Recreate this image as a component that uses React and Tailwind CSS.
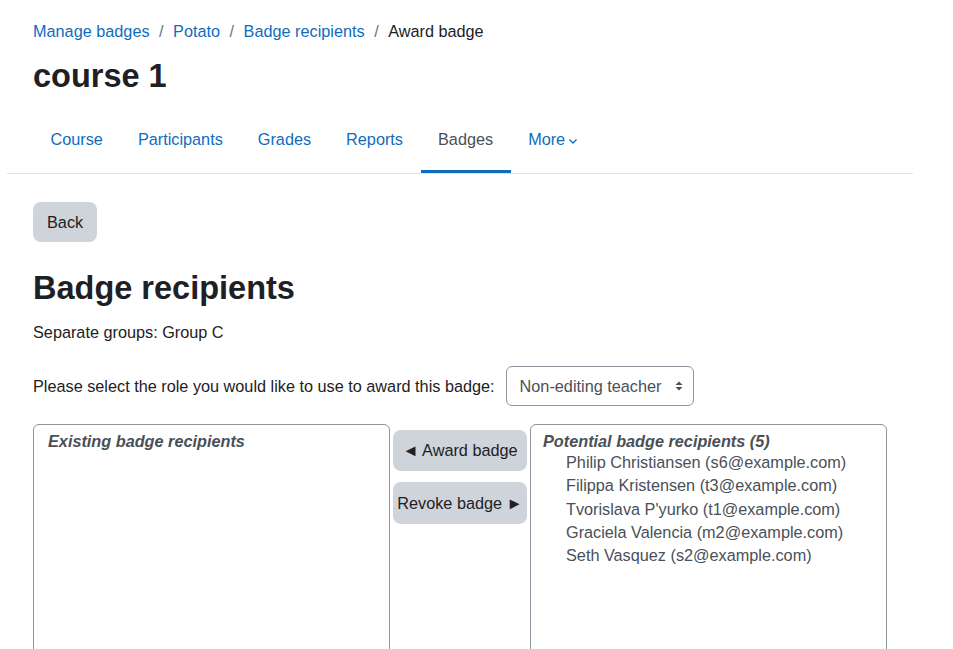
import React from 'react';

const tabs = ['Course', 'Participants', 'Grades', 'Reports', 'Badges'];

const potential = [
    'Philip Christiansen (s6@example.com)',
    'Filippa Kristensen (t3@example.com)',
    "Tvorislava P'yurko (t1@example.com)",
    'Graciela Valencia (m2@example.com)',
    'Seth Vasquez (s2@example.com)',
];

const App = () => {
    return (
        <div className="min-h-screen bg-white text-[#1d2125] text-[16.25px] font-['Liberation_Sans',Arial,sans-serif]">
            <div className="ml-[7px] w-[906px]">
                {/* Page header */}
                <div className="px-[26px] pt-[19px]">
                    <nav className="flex items-center leading-[24px]">
                        <a className="text-[#0f6cbf]">Manage badges</a>
                        <span className="px-[9.5px] text-[#6a737b]">/</span>
                        <a className="text-[#0f6cbf]">Potato</a>
                        <span className="px-[9.5px] text-[#6a737b]">/</span>
                        <a className="text-[#0f6cbf]">Badge recipients</a>
                        <span className="px-[9.5px] text-[#6a737b]">/</span>
                        <span>Award badge</span>
                    </nav>
                    <h1 className="mt-[14px] text-[32.5px] leading-[38px] font-bold">course 1</h1>
                </div>

                {/* Secondary navigation */}
                <div className="mt-[12px] border-b border-[#dee2e6] pl-[26px]">
                    <ul className="flex">
                        {tabs.map((t) => (
                            <li
                                key={t}
                                className={`flex items-center h-[66px] pt-[2px] px-[17.5px] border-b-[3px] ${t === 'Badges'
                                    ? 'border-[#0f6cbf] text-[#495057]'
                                    : 'border-transparent text-[#0f6cbf]'
                                    }`}
                            >
                                {t}
                            </li>
                        ))}
                        <li className="flex items-center gap-[3px] h-[66px] pt-[2px] px-[17.5px] border-b-[3px] border-transparent text-[#0f6cbf]">
                            More
                            <svg width="10" height="10" viewBox="0 0 10 10" className="mt-[2px]">
                                <path d="M1.5 3.5 L5 7 L8.5 3.5" fill="none" stroke="#0f6cbf" strokeWidth="1.3" />
                            </svg>
                        </li>
                    </ul>
                </div>

                {/* Main */}
                <div className="px-[26px]">
                    <button className="mt-[28px] h-[40px] px-[14px] rounded-[8px] bg-[#ced4da] text-[#1d2125]">
                        Back
                    </button>

                    <h2 className="mt-[27px] text-[32.5px] leading-[38px] font-bold">Badge recipients</h2>

                    <p className="mt-[13px] leading-[24px]">Separate groups: Group C</p>

                    <div className="mt-[22px] flex items-center">
                        <label className="leading-[24px]">Please select the role you would like to use to award this badge:</label>
                        <div className="ml-[11px] flex items-center justify-between h-[40px] w-[188px] pl-[13px] pr-[10px] rounded-[6px] border border-[#8f959e] text-[#495057]">
                            <span>Non-editing teacher</span>
                            <svg width="8" height="12" viewBox="0 0 8 12">
                                <path d="M4 1.5 L7.5 5 L0.5 5 Z" fill="#495057" />
                                <path d="M4 10.5 L7.5 7 L0.5 7 Z" fill="#495057" />
                            </svg>
                        </div>
                    </div>

                    {/* Recipient selectors */}
                    <div className="mt-[18px] flex items-start gap-[3px]">
                        <div className="w-[357px] h-[300px] rounded-[6px] border border-[#8f959e] pt-[6px] pl-[14px]">
                            <div className="italic font-bold text-[#495057] leading-[20px]">Existing badge recipients</div>
                        </div>

                        <div className="w-[134px] flex flex-col gap-[11px] pt-[6px]">
                            <button className="h-[41px] rounded-[8px] bg-[#ced4da] text-[#1d2125]">◄ Award badge</button>
                            <button className="h-[42px] rounded-[8px] bg-[#ced4da] text-[#1d2125]">Revoke badge ►</button>
                        </div>

                        <div className="w-[357px] h-[300px] rounded-[6px] border border-[#8f959e] pt-[6px] pl-[12px]">
                            <div className="italic font-bold text-[#495057] leading-[20px]">Potential badge recipients (5)</div>
                            <ul className="pl-[23px] text-[#495057]">
                                {potential.map((p) => (
                                    <li key={p} className="leading-[23.3px]">{p}</li>
                                ))}
                            </ul>
                        </div>
                    </div>
                </div>
            </div>
        </div>
    );
};

export default App;
